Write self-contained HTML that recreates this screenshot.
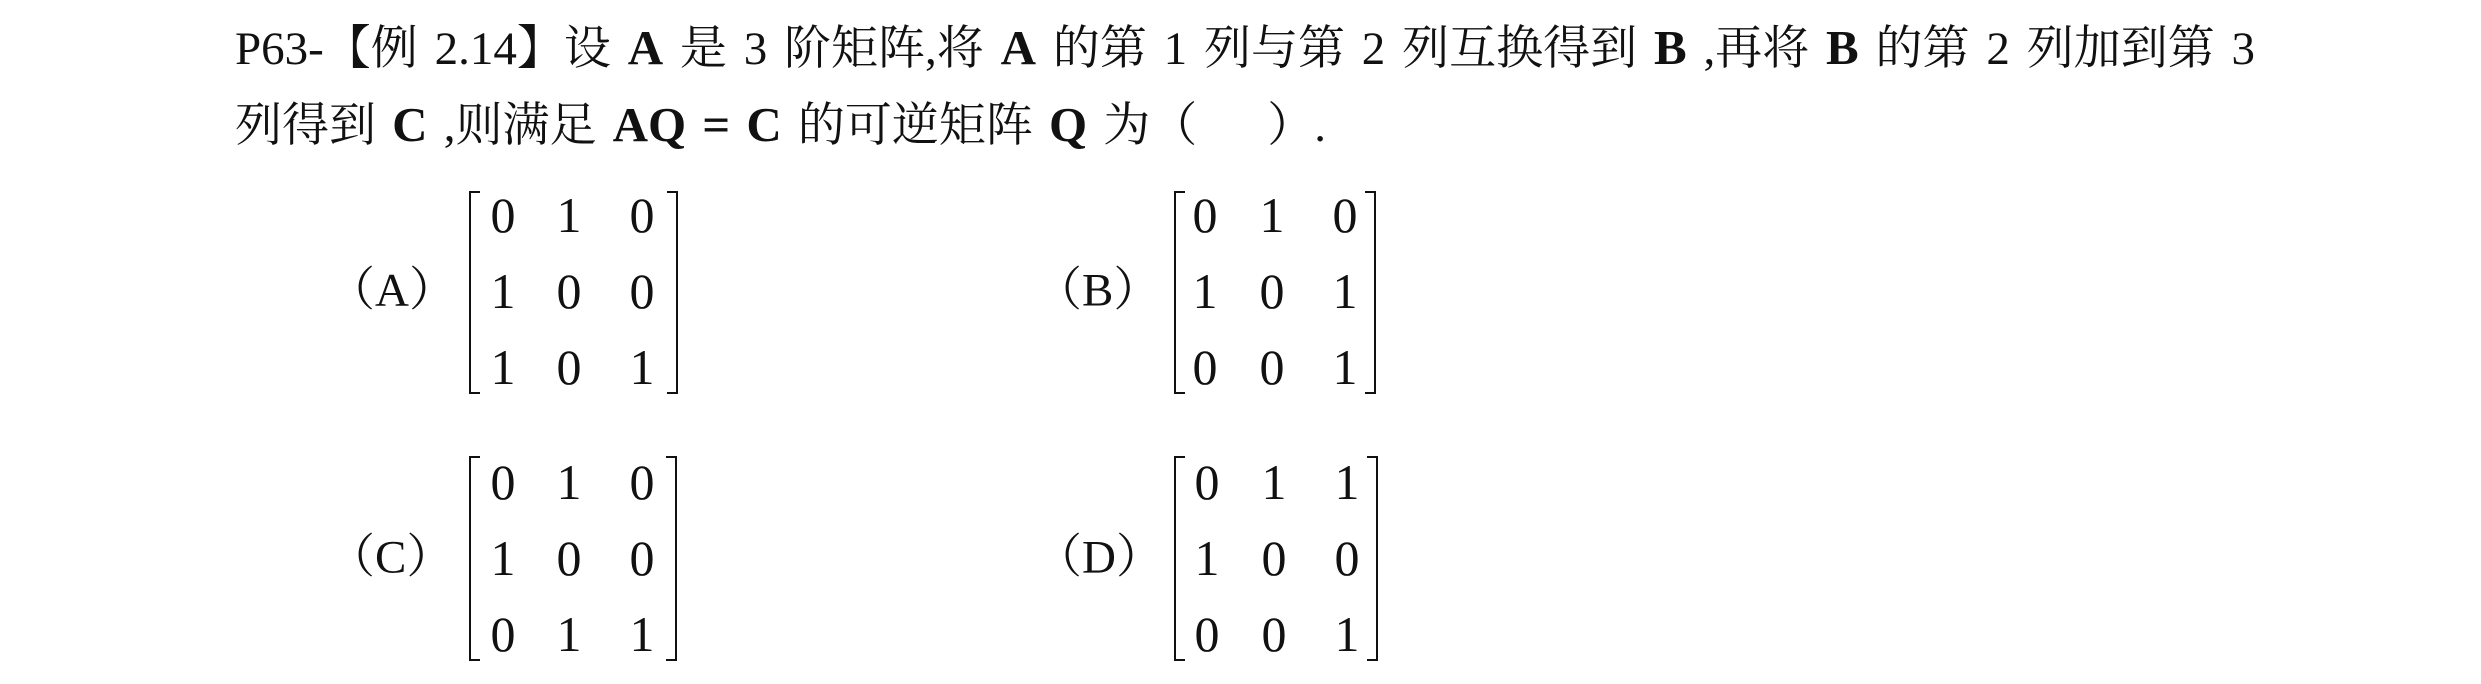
<!DOCTYPE html>
<html><head><meta charset="utf-8"><style>
body{margin:0;width:2481px;height:684px;background:#fff;position:relative;overflow:hidden;font-family:"Liberation Serif","Noto Serif CJK SC",serif;color:#111}
.l{position:absolute;left:235px;font-size:47px;white-space:pre;line-height:1}
b{font-weight:bold;font-size:49px}
.d{position:absolute;font-size:50px;line-height:1;width:40px;text-align:center;transform:translate(-50%,-50%)}
.lab{position:absolute;font-size:47px;line-height:1;transform:translateY(-50%);white-space:nowrap}
.br{position:absolute;width:9px;border:2.5px solid #111}
.bl{border-right:none}.brr{border-left:none}
</style></head><body>
<div class="l" id="l1" data-t="2255" style="top:23px">P63-【例 2.14】设 <b>A</b> 是 3 阶矩阵,将 <b>A</b> 的第 1 列与第 2 列互换得到 <b>B</b> ,再将 <b>B</b> 的第 2 列加到第 3</div>
<div class="l" id="l2" data-t="1326" style="top:100px">列得到 <b>C</b> ,则满足 <b>AQ</b> <b>=</b> <b>C</b> 的可逆矩阵 <b>Q</b> 为（<span style="display:inline-block;width:70px"></span>）.</div>
<script>
['l1','l2'].forEach(function(id){var e=document.getElementById(id);var t=+e.dataset.t;var w=e.getBoundingClientRect().right;var n=(e.textContent.match(/ /g)||[]).length;if(n){e.style.wordSpacing=((t-w)/n)+'px';}});
</script>

<div class="lab" style="left:328px;top:291px">（A）</div>
<div class="br bl" style="left:469px;top:191px;height:199px"></div>
<div class="br brr" style="left:667px;top:191px;height:199px"></div>
<div class="d" style="left:503px;top:215px">0</div><div class="d" style="left:569px;top:215px">1</div><div class="d" style="left:642px;top:215px">0</div>
<div class="d" style="left:503px;top:291px">1</div><div class="d" style="left:569px;top:291px">0</div><div class="d" style="left:642px;top:291px">0</div>
<div class="d" style="left:503px;top:367px">1</div><div class="d" style="left:569px;top:367px">0</div><div class="d" style="left:642px;top:367px">1</div>

<div class="lab" style="left:1035px;top:291px">（B）</div>
<div class="br bl" style="left:1174px;top:191px;height:199px"></div>
<div class="br brr" style="left:1365px;top:191px;height:199px"></div>
<div class="d" style="left:1205px;top:215px">0</div><div class="d" style="left:1272px;top:215px">1</div><div class="d" style="left:1345px;top:215px">0</div>
<div class="d" style="left:1205px;top:291px">1</div><div class="d" style="left:1272px;top:291px">0</div><div class="d" style="left:1345px;top:291px">1</div>
<div class="d" style="left:1205px;top:367px">0</div><div class="d" style="left:1272px;top:367px">0</div><div class="d" style="left:1345px;top:367px">1</div>

<div class="lab" style="left:328px;top:558px">（C）</div>
<div class="br bl" style="left:469px;top:456px;height:201px"></div>
<div class="br brr" style="left:666px;top:456px;height:201px"></div>
<div class="d" style="left:503px;top:482px">0</div><div class="d" style="left:569px;top:482px">1</div><div class="d" style="left:642px;top:482px">0</div>
<div class="d" style="left:503px;top:558px">1</div><div class="d" style="left:569px;top:558px">0</div><div class="d" style="left:642px;top:558px">0</div>
<div class="d" style="left:503px;top:634px">0</div><div class="d" style="left:569px;top:634px">1</div><div class="d" style="left:642px;top:634px">1</div>

<div class="lab" style="left:1035px;top:558px">（D）</div>
<div class="br bl" style="left:1174px;top:456px;height:201px"></div>
<div class="br brr" style="left:1367px;top:456px;height:201px"></div>
<div class="d" style="left:1207px;top:482px">0</div><div class="d" style="left:1274px;top:482px">1</div><div class="d" style="left:1347px;top:482px">1</div>
<div class="d" style="left:1207px;top:558px">1</div><div class="d" style="left:1274px;top:558px">0</div><div class="d" style="left:1347px;top:558px">0</div>
<div class="d" style="left:1207px;top:634px">0</div><div class="d" style="left:1274px;top:634px">0</div><div class="d" style="left:1347px;top:634px">1</div>
</body></html>
